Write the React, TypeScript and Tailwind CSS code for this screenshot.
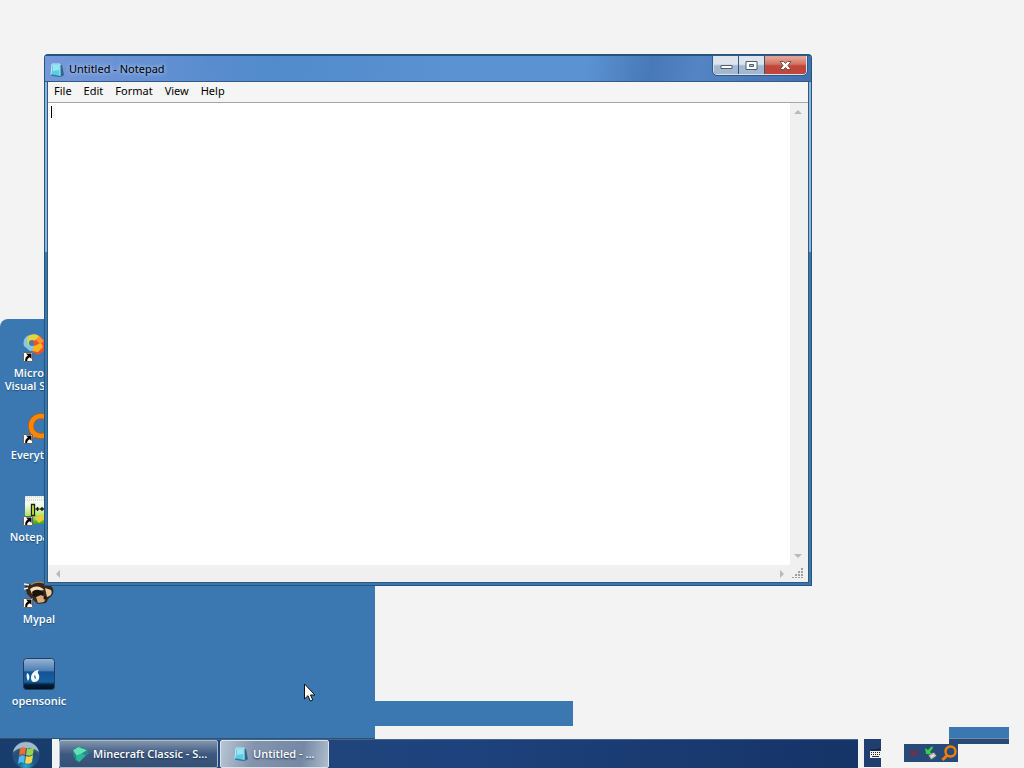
import type { ReactNode } from "react";

function ShortcutArrow() {
  return (
    <svg viewBox="0 0 10 10" className="absolute bottom-0 left-0 size-[10px]" aria-hidden="true">
      <rect width="10" height="10" fill="#fff" />
      <path d="M.5.5h9v9h-9z" fill="none" stroke="#222" strokeWidth="0.700" />
      <path d="M3 1.500h5.500V7L6.800 5.300C5 6 4 7.300 4.200 9H2.300C1.800 6.500 3 4.700 4.900 3.500z" fill="#000" />
    </svg>
  );
}

function StudioIcon() {
  return (
    <svg viewBox="0 0 32 32" className="size-8" aria-hidden="true">
      <path d="M1 16C-1 9 4 4 11 5l5 4-5 5 2 6-6 1z" fill="#86c8dc" />
      <path d="M4 9c2-5 8-6 12-3l2 4-6 1-3 5-4-1z" fill="#e8d43a" />
      <circle cx="9" cy="13" r="3" fill="#4678b4" />
      <path d="M10 12l7-6 5 5 6-6 4 3-5 8 5 9-5 2-6-6-6 4-6-4 3-4z" fill="#f0502c" />
      <path d="M11 16l7-3 2 4-5 5-6-1z" fill="#ffb51f" />
      <path d="M16 6l5 5-4 3-4-4z" fill="#ff9630" />
    </svg>
  );
}

function SearchRing() {
  return (
    <svg viewBox="0 0 32 32" className="size-8" aria-hidden="true">
      <circle cx="18" cy="14" r="10" fill="none" stroke="#b75a08" strokeWidth="6" />
      <circle cx="18" cy="14" r="10" fill="none" stroke="#ff8500" strokeWidth="4.500" />
      <path d="M12 21l-8 8" stroke="#ff8500" strokeWidth="5" />
    </svg>
  );
}

function NotepadPlusIcon() {
  return (
    <svg viewBox="0 0 32 32" className="size-8" aria-hidden="true">
      <defs>
        <linearGradient id="npp" x1="0" y1="0" x2="0" y2="1">
          <stop offset="0.3" stopColor="#f5faee" />
          <stop offset="0.65" stopColor="#bde96c" />
          <stop offset="1" stopColor="#38a419" />
        </linearGradient>
      </defs>
      <path d="M2 2h28v28H2z" fill="url(#npp)" />
      <path d="M2 3h28M2 6h28" stroke="#bcc4bf" strokeDasharray="1 1" />
      <path d="M8.500 10.500h3v11h-3z" fill="#d6e94a" stroke="#17220c" strokeWidth="1.300" />
      <path d="M12.500 15h4M14.500 13v4M17 15h4M19 13v4" stroke="#111" strokeWidth="1.300" />
      <path d="M11 24l8-3 5 2-8 6z" fill="#f1ca3c" />
    </svg>
  );
}

function MypalIcon() {
  return (
    <svg viewBox="0 0 32 32" className="size-8" aria-hidden="true">
      <path d="M2 10l4-2 3 1c6-5 16-4 20 2 3 4 1 9-3 11l-3 5-8 1-6-5-5-5z" fill="#392819" />
      <path d="M8 8c7-5 16-2 19 2l-4-1c-4-3-10-3-15 0z" fill="#a98862" />
      <path d="M7 13c5-4 11-3 14 1l-6 1-6 3z" fill="#f5dfbb" />
      <path d="M22 12l6 2c2 4-1 6-4 7z" fill="#e9c99d" />
      <path d="M9 16c3-3 8-3 12 1l-4 5-7-2z" fill="#1a120d" />
      <path d="M13 21l5-2 5 3-2 4-6 1z" fill="#d8ad7d" />
      <circle cx="22" cy="22" r="1.500" fill="#16100c" />
      <path d="M1 8l5 1M1 13l4-1" stroke="#f7efdf" strokeWidth="1.500" />
    </svg>
  );
}

function SonicIcon() {
  return (
    <svg viewBox="0 0 32 32" className="size-8" aria-hidden="true">
      <defs>
        <linearGradient id="sonic" x1="0" y1="0" x2="0" y2="1">
          <stop offset="0" stopColor="#9bb4d5" />
          <stop offset="0.4" stopColor="#4b7eb5" />
          <stop offset="0.43" stopColor="#145192" />
          <stop offset="0.75" stopColor="#1761a2" />
          <stop offset="0.85" stopColor="#061c39" />
          <stop offset="1" stopColor="#04101f" />
        </linearGradient>
      </defs>
      <rect x="0.500" y="0.500" width="31" height="31" rx="3" fill="url(#sonic)" stroke="#1e3e63" />
      <path d="M4 15c3 1 3 6 1 8-1-2-2-5-1-8zM8 20c0-5 4-8 8-8-2 2-1 3 0 5 1 4-1 7-5 7-2 0-3-2-3-4z" fill="#f5fbff" />
      <path d="M11 18l1-1 1 3-1 1z" fill="#286ca9" />
    </svg>
  );
}

function NoteIcon() {
  return (
    <svg viewBox="0 0 16 16" className="size-4 shrink-0" aria-hidden="true">
      <path d="M11 3l2 0 2 10-3 2-2-2z" fill="#2d668f" />
      <path d="M3 2l8 0v12l-9-1z" fill="#5ccbe5" stroke="#b8edf5" />
      <path d="M4 3l6 0v5L4 9z" fill="#98e6f2" />
      <path d="M2 13l9 1.500" stroke="#287e9c" strokeWidth="1.500" />
    </svg>
  );
}

function StartOrb() {
  return (
    <svg viewBox="0 0 28 28" className="size-7" aria-hidden="true">
      <defs>
        <radialGradient id="orb" cx="0.5" cy="0.9" r="0.9">
          <stop offset="0" stopColor="#23aacc" />
          <stop offset="0.35" stopColor="#195b88" />
          <stop offset="0.65" stopColor="#284e75" />
          <stop offset="1" stopColor="#5d7f9c" />
        </radialGradient>
      </defs>
      <circle cx="14" cy="15" r="13.500" fill="url(#orb)" />
      <path d="M1 12C4-1 24-1 27 12c-5-4-8-4-13-4S6 8 1 12z" fill="#b9cfdc" opacity="0.800" />
      <path d="M8 9c2-2 4-2 6-1l-1 7c-2-1-4-1-6 1z" fill="#f46b31" />
      <path d="M15 8c2 1 4 1 7-1l-1 7c-2 2-4 2-7 1z" fill="#91d64d" />
      <path d="M7 17c2-2 4-2 6-1l-1 7c-2-1-4-1-6 1z" fill="#55b8ef" />
      <path d="M14 16c2 1 4 1 7-1l-1 7c-2 2-4 2-7 1z" fill="#ffd34e" />
    </svg>
  );
}

function DesktopIcon({ label, shortcut = true, children }: { label: ReactNode; shortcut?: boolean; children: ReactNode }) {
  return (
    <button type="button" className="flex h-[82px] w-full flex-col items-center text-[11px] leading-[13px] font-bold text-white [text-shadow:0_1px_1px_#24517d]">
      <span className="relative mb-1 block">
        {children}
        {shortcut && <ShortcutArrow />}
      </span>
      <span className="text-center font-semibold whitespace-nowrap">{label}</span>
    </button>
  );
}

function CaptionButtons() {
  const base = "flex h-[18px] items-center justify-center border-r border-[#31557e]";
  const glass = "bg-linear-to-b from-[#dce4ee] from-45% to-[#a3b8cf] to-55%";
  return (
    <div className="mr-px flex overflow-hidden rounded-b border border-t-0 border-[#d7e2ef] outline outline-[#315a87]">
      <button type="button" aria-label="Minimize" className={`${base} ${glass} w-[25px]`}>
        <svg viewBox="0 0 13 11" className="w-[13px]"><path d="M1 5.500h11v3H1z" fill="#fff" stroke="#4f5e70" /></svg>
      </button>
      <button type="button" aria-label="Maximize" className={`${base} ${glass} w-[26px]`}>
        <svg viewBox="0 0 13 11" className="w-[13px]"><path d="M1 1.500h11v8H1z" fill="#fff" stroke="#4f5e70" /><path d="M4.500 4.500h4v2h-4z" fill="#b6c6d8" stroke="#4f5e70" /></svg>
      </button>
      <button type="button" aria-label="Close" className="flex h-[18px] w-[41px] items-center justify-center bg-linear-to-b from-[#e4a091] from-10% via-[#d27362] via-45% to-[#bf4638] to-55%">
        <svg viewBox="0 0 13 11" className="w-[13px]"><path d="M1 1.500h3.500l2 2 2-2H12l-3 4 3 4H8.500l-2-2-2 2H1l3-4z" fill="#fff" stroke="#6e5152" /></svg>
      </button>
    </div>
  );
}

function Arrow({ direction }: { direction: "up" | "down" | "left" | "right" }) {
  const shapes = { up: "M0 6l4-4 4 4z", down: "M0 2l4 4 4-4z", left: "M6 0L2 4l4 4z", right: "M2 0l4 4-4 4z" };
  return (
    <button type="button" aria-label={`Scroll ${direction}`} className="flex h-[18px] w-4 items-center justify-center">
      <svg viewBox="0 0 8 8" className="size-2"><path d={shapes[direction]} fill="#b9b9b9" /></svg>
    </button>
  );
}

function NotepadWindow() {
  return (
    <section aria-label="Untitled - Notepad" className="absolute top-[54px] left-11 flex h-[532px] w-3/4 flex-col rounded-t-sm border-t-2 border-r border-b border-l border-[#23557f] bg-linear-to-b from-[#8eb5df] from-37% to-[#3977b1] to-37%">
      <header className="flex h-[26px] shrink-0 justify-between border-b border-[#315a87] bg-linear-to-r from-[#7698da] via-[#4d88ca] via-30% to-[#4778ba] pl-1">
        <h1 className="flex items-center gap-1 pt-0.5 font-['Noto_Sans',sans-serif] text-[11px] text-black [text-shadow:0_0_4px_#d9e9ff]">
          <NoteIcon />
          Untitled - Notepad
        </h1>
        <div className="flex flex-1 items-start justify-end bg-[linear-gradient(100deg,#4d88ca00_5%,#5b93d2_45%,#5b93d2_65%,#4878b8_75%,#5584c4_82%,#4270ae)] pr-[3px]">
          <CaptionButtons />
        </div>
      </header>
      <div className="mx-[2px] mb-[2px] flex min-h-0 flex-1 flex-col border-x border-b border-[#315a77] bg-[#f0f0f0]">
        <nav className="flex h-[21px] shrink-0 items-center gap-3 border-b border-[#a7a7a7] bg-[#f5f5f5] px-1.5 pb-0.5 font-['Noto_Sans',sans-serif] text-[11px] text-black">
          {["File", "Edit", "Format", "View", "Help"].map((item) => (
            <button type="button" key={item}>{item}</button>
          ))}
        </nav>
        <div className="flex min-h-0 flex-1">
          <div className="relative flex min-w-0 flex-1 bg-white">
            <textarea aria-label="Document text" className="min-w-0 flex-1 resize-none overflow-hidden bg-white px-1 py-0.5 text-xs outline-none" />
            <span className="absolute top-[3px] left-[3px] h-3 w-px bg-black" />
          </div>
          <div className="flex w-[18px] flex-col justify-between bg-[#f0f0f0]">
            <Arrow direction="up" />
            <Arrow direction="down" />
          </div>
        </div>
        <div className="flex h-[17px] shrink-0 items-center justify-between pl-0.5">
          <Arrow direction="left" />
          <div className="flex items-center">
            <Arrow direction="right" />
            <svg viewBox="0 0 18 17" className="w-[18px]" aria-hidden="true">
              <path d="M11 3h2v2h-2zM8 6h2v2H8zM11 6h2v2h-2zM5 9h2v2H5zM8 9h2v2H8zM11 9h2v2h-2zM2 12h2v1H2zM5 12h2v1H5zM8 12h2v1H8zM11 12h2v1h-2z" fill="#a0a0a0" />
            </svg>
          </div>
        </div>
      </div>
    </section>
  );
}

function Cursor() {
  return (
    <svg viewBox="0 0 12 19" className="absolute top-[683px] left-[304px] h-[19px] w-3" aria-hidden="true">
      <path d="M.5 1v15l3.500-3.300 2.300 5.300 2.500-1-2.300-5H11z" fill="#fff" stroke="#111" />
    </svg>
  );
}

function Taskbar() {
  const task = "flex h-7 items-center gap-1 rounded-xs border text-[11px] font-semibold text-white [text-shadow:0_1px_2px_#142c4c]";
  return (
    <footer className="flex h-[29px] shrink-0">
      <button type="button" aria-label="Start" className="mr-[7px] flex w-[52px] shrink-0 items-center justify-center bg-[#183d6c]">
        <StartOrb />
      </button>
      <nav className="mr-1.5 flex flex-1 gap-0.5 border-t border-[#45678b] bg-linear-to-r from-[#254a78] via-[#1e427d] via-50% to-[#153467]">
        <button type="button" className={`${task} w-[159px] border-[#a8b9ce] bg-linear-to-b from-[#8395ae] via-[#3e5980] via-50% to-[#354f75] pl-3`}>
          <svg viewBox="0 0 16 16" className="size-[17px] shrink-0" aria-hidden="true">
            <path d="M1 4l4-3 5 0 5 3 1 3-6 4-3 4-3-1-3-5z" fill="#208e86" />
            <path d="M1 4l5-3 8 3-5 3-4 3z" fill="#65e0b8" />
            <path d="M4 9l5-2 4 2-3 3-3 3-3-2z" fill="#2bb79c" />
          </svg>
          Minecraft Classic - S...
        </button>
        <button type="button" className={`${task} w-[109px] border-[#dce5ee] bg-[linear-gradient(100deg,#b8c5d4,#8394ad_30%,#7488a5_75%,#afbdcd)] pl-3`}>
          <NoteIcon />
          Untitled - ...
        </button>
      </nav>
      <button type="button" aria-label="Keyboard" className="mr-[23px] flex h-7 w-[17px] shrink-0 items-center justify-end bg-[#203f70]">
        <svg viewBox="0 0 11 10" className="w-[11px]" aria-hidden="true">
          <path d="M1 2h8V0" fill="none" stroke="#131722" /><path d="M0 3h11v7H0z" fill="#f3f3f3" /><path d="M1 4.500h10M1 6.500h10" stroke="#222" strokeDasharray="1 1" /><path d="M2 8.500h7" stroke="#333" />
        </svg>
      </button>
      <div className="mt-[5px] mr-[66px] flex h-[18px] w-[54px] shrink-0 items-center justify-between bg-[#284a78] pl-1">
        <svg viewBox="0 0 12 12" className="size-3" aria-hidden="true"><path d="M1 3l4 1 5-1-2 3 3 3-5-1-4 2 1-4z" fill="#762e50" /></svg>
        <svg viewBox="0 0 14 16" className="h-4 w-3.5" aria-hidden="true">
          <path d="M4 10l6-3 3 4-6 4z" fill="#b9c1c5" stroke="#40505c" /><path d="M7 12l3-2" stroke="#fff" />
          <path d="M1 3l3 2 4-4 1 2-3 4 2 2H2z" fill="#34cf43" />
        </svg>
        <svg viewBox="0 0 17 17" className="size-[17px]" aria-hidden="true"><circle cx="9.500" cy="6.500" r="5" fill="none" stroke="#f57c08" strokeWidth="2.500" /><path d="M6.500 10l-5 5" stroke="#f57c08" strokeWidth="3" /></svg>
      </div>
    </footer>
  );
}

export default function App() {
  return (
    <div className="relative flex min-h-screen flex-col overflow-hidden bg-[#f3f3f3] font-['Open_Sans','Noto_Sans',sans-serif]">
      <main className="min-h-[739px] flex-1">
        <div className="absolute top-[319px] left-0 h-[420px] w-[375px] rounded-tl-lg border-b border-[#31516e] bg-[#3b78b2]" />
        <div className="absolute top-[701px] left-[375px] h-[25px] w-[198px] bg-[#3b78b2]" />
        <div className="absolute top-[330px] left-0 w-[78px]">
          <DesktopIcon label={<>Microsoft<br />Visual Studio</>}><StudioIcon /></DesktopIcon>
          <DesktopIcon label="Everything"><SearchRing /></DesktopIcon>
          <DesktopIcon label="Notepad++"><NotepadPlusIcon /></DesktopIcon>
          <DesktopIcon label="Mypal"><MypalIcon /></DesktopIcon>
          <DesktopIcon label="opensonic" shortcut={false}><SonicIcon /></DesktopIcon>
        </div>
        <NotepadWindow />
        <Cursor />
      </main>
      <Taskbar />
      <div className="absolute right-[15px] bottom-[24px] h-[17px] w-[60px] bg-[#284a78]">
        <div className="h-3 border-b border-[#758a9b] bg-[#3b78b2]" />
      </div>
    </div>
  );
}
